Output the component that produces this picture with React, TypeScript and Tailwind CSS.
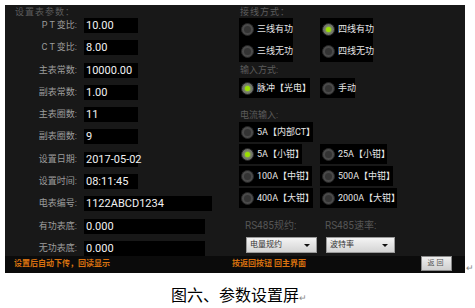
import React from "react"

const rows = [
  { label: "P T 变比:", value: "10.00", w: "w-[54px]" },
  { label: "C T 变比:", value: "8.00", w: "w-[54px]" },
  { label: "主表常数:", value: "10000.00", w: "w-[54px]" },
  { label: "副表常数:", value: "1.00", w: "w-[54px]" },
  { label: "主表圈数:", value: "11", w: "w-[54px]" },
  { label: "副表圈数:", value: "9", w: "w-[54px]" },
  { label: "设置日期:", value: "2017-05-02", w: "w-[54px]" },
  { label: "设置时间:", value: "08:11:45", w: "w-[54px]" },
  { label: "电表编号:", value: "1122ABCD1234", w: "w-[128px]" },
  { label: "有功表底:", value: "0.000", w: "w-[121px]" },
  { label: "无功表底:", value: "0.000", w: "w-[121px]" },
]

function Dot({ on }: { on?: boolean }) {
  return (
    <span
      className={
        "flex h-[13px] w-[13px] shrink-0 items-center justify-center rounded-full border border-[#262626] " +
        (on ? "bg-[#6e6e6e]" : "bg-[#4a4a4a]")
      }
    >
      {on ? (
        <span className="h-[5px] w-[5px] rounded-full bg-[#9be000] shadow-[0_0_3px_#b8ff2a]" />
      ) : (
        <span className="h-[7px] w-[7px] rounded-full bg-[#343434]" />
      )}
    </span>
  )
}

function Radio({ label, on, className }: { label: string; on?: boolean; className: string }) {
  return (
    <div className={"flex items-center whitespace-nowrap pl-[2px] " + className}>
      <Dot on={on} />
      <span className="ml-[3px] text-[9px] leading-none text-[#e6e6e6]">{label}</span>
    </div>
  )
}

function Select({ text, className }: { text: string; className: string }) {
  return (
    <div
      className={
        "flex h-[16px] items-center justify-between border border-[#9a9a9a] bg-gradient-to-b from-[#f4f4f4] to-[#d4d4d4] pl-[3px] pr-[6px] " +
        className
      }
    >
      <span className="text-[8px] leading-none text-[#333]">{text}</span>
      <span className="h-0 w-0 border-x-[3px] border-t-[3px] border-x-transparent border-t-[#111]" />
    </div>
  )
}

export default function App() {
  return (
    <div className="h-[308px] w-[475px] overflow-hidden bg-white font-['Roboto','Noto_Sans_CJK_SC',sans-serif]">
      <div className="flex pl-[5px] pt-[5px]">
        <div className="flex h-[268px] w-[460px] flex-col bg-[#181818]">
          <div className="flex h-[251px] overflow-hidden">
            {/* left column */}
            <div className="w-[234px] shrink-0">
              <div className="mt-[1px] h-[12px] pl-[10px] text-[9px] leading-[12px] tracking-[1px] text-[#5c5c5c]">
                设置表参数：
              </div>
              <div className="flex flex-col gap-[7.3px]">
                {rows.map((r) => (
                  <div key={r.label} className="flex h-[15px] items-center">
                    <div className="w-[73px] whitespace-nowrap pr-[1px] text-right text-[9px] leading-none text-[#9c9c9c]">
                      {r.label}
                    </div>
                    <div className={"ml-[6px] flex h-[15px] items-center bg-black pl-[2px] " + r.w}>
                      <span className="whitespace-nowrap text-[11px] leading-none text-[#f2f2f2]">{r.value}</span>
                    </div>
                  </div>
                ))}
              </div>
            </div>

            {/* right column */}
            <div className="flex-1">
              <div className="mt-[1px] h-[12px] pl-[1px] text-[9px] leading-[12px] tracking-[1px] text-[#5c5c5c]">
                接线方式：
              </div>
              <div className="flex gap-[27px]">
                <div className="flex w-[54px] flex-col bg-black">
                  <Radio label="三线有功" className="h-[22px]" />
                  <Radio label="三线无功" className="h-[22px]" />
                </div>
                <div className="flex w-[53px] flex-col bg-black">
                  <Radio label="四线有功" on className="h-[22px]" />
                  <Radio label="四线无功" className="h-[22px]" />
                </div>
              </div>

              <div className="mt-[2px] h-[12px] pl-[1px] text-[9px] leading-[12px] text-[#5c5c5c]">输入方式:</div>
              <div className="mt-[2px] flex gap-[10px]">
                <Radio label="脉冲【光电】" on className="h-[20px] w-[71px] bg-black" />
                <Radio label="手动" className="h-[20px] w-[35px] bg-black" />
              </div>

              <div className="mt-[11px] h-[12px] pl-[1px] text-[9px] leading-[12px] text-[#5c5c5c]">电流输入:</div>
              <div className="mt-[1px] flex flex-col gap-[2px]">
                <div className="flex">
                  <Radio label="5A【内部CT】" className="h-[20px] w-[74px] bg-black" />
                </div>
                <div className="flex">
                  <div className="w-[81px]">
                    <Radio label="5A【小钳】" on className="h-[20px] w-[63px] bg-black" />
                  </div>
                  <Radio label="25A【小钳】" className="h-[20px] w-[67px] bg-black" />
                </div>
                <div className="flex">
                  <div className="w-[81px]">
                    <Radio label="100A【中钳】" className="h-[20px] w-[73px] bg-black" />
                  </div>
                  <Radio label="500A【中钳】" className="h-[20px] w-[73px] bg-black" />
                </div>
                <div className="flex">
                  <div className="w-[81px]">
                    <Radio label="400A【大钳】" className="h-[20px] w-[74px] bg-black" />
                  </div>
                  <Radio label="2000A【大钳】" className="h-[20px] w-[77px] bg-black" />
                </div>
              </div>

              <div className="mt-[12px] flex h-[12px] text-[10px] leading-[12px] text-[#555]">
                <span className="ml-[6px] w-[80px]">RS485规约:</span>
                <span>RS485速率:</span>
              </div>
              <div className="mt-[5px] flex">
                <Select text="电量规约" className="ml-[7px] w-[71px]" />
                <Select text="波特率" className="ml-[9px] w-[69px]" />
              </div>
            </div>
          </div>

          {/* bottom bar */}
          <div className="flex h-[17px] items-start bg-[#0b0b0b]">
            <span className="ml-[9px] mt-[4px] w-[218px] text-[8px] font-bold leading-none text-[#d9720f]">
              设置后自动下传，回读显示
            </span>
            <span className="mt-[4px] w-[189px] text-[8px] font-bold leading-none text-[#d9720f]">
              按返回按钮 回主界面
            </span>
            <div className="flex h-[15px] w-[31px] items-center justify-center border border-[#8a8a8a] bg-gradient-to-b from-[#eeeeee] to-[#cfcfcf] text-[7px] leading-none tracking-[2px] text-[#555]">
              返回
            </div>
          </div>
        </div>
        <span className="ml-[1px] self-end text-[9px] leading-none text-[#888]">↵</span>
      </div>

      <div className="mt-[13px] flex items-end pl-[171px] font-['Noto_Sans_CJK_SC',sans-serif]">
        <span className="text-[16px] leading-[16px] text-black">图六、参数设置屏</span>
        <span className="text-[9px] leading-none text-[#888]">↵</span>
      </div>
    </div>
  )
}
